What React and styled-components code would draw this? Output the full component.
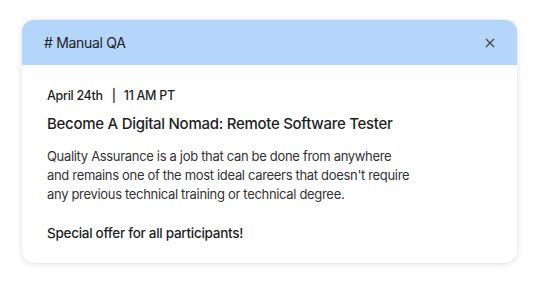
import React from 'react';
import styled, { createGlobalStyle } from 'styled-components';

const GlobalStyle = createGlobalStyle`
	html, body {
		margin: 0;
		padding: 0;
		background: #fff;
		font-family: Inter, "Noto Sans", sans-serif;
		-webkit-font-smoothing: antialiased;
	}
`;

const Page = styled.div`
	width: 540px;
	height: 283px;
	padding: 20px 23px 0 22px;
	box-sizing: border-box;
`;

const Card = styled.div`
	width: 495px;
	height: 243px;
	border-radius: 12px;
	background: #fff;
	overflow: hidden;
	box-shadow: 0 1px 6px rgba(0, 0, 0, 0.12), 0 0 2px rgba(0, 0, 0, 0.06);
	display: flex;
	flex-direction: column;
`;

const Header = styled.div`
	height: 45px;
	background: #b4d6fa;
	display: flex;
	align-items: center;
	justify-content: space-between;
	padding: 0 20px 0 22px;
	box-sizing: border-box;
`;

const Channel = styled.span`
	font-size: 14px;
	color: #222;
	letter-spacing: -0.3px;
`;

const Close = styled.button`
	border: 0;
	background: none;
	padding: 0;
	width: 14px;
	height: 14px;
	display: flex;
	color: #444;
	cursor: pointer;
`;

const Body = styled.div`
	padding: 22px 25px 0;
	display: flex;
	flex-direction: column;
	color: #1f1f1f;
`;

const Meta = styled.div`
	font-size: 12.5px;
	font-weight: 500;
	line-height: 18px;
	letter-spacing: -0.3px;
	display: flex;
	align-items: center;
`;

const Divider = styled.span`
	margin: 0 8px 0 9px;
`;

const Title = styled.div`
	font-size: 15px;
	font-weight: 500;
	margin-top: 9px;
	line-height: 20px;
	letter-spacing: -0.28px;
`;

const Text = styled.p`
	margin: 13px 0 0;
	font-size: 13px;
	line-height: 19px;
	color: #333;
	letter-spacing: -0.32px;
`;

const Offer = styled.div`
	margin-top: 20px;
	font-size: 13.5px;
	font-weight: 500;
	line-height: 19px;
	letter-spacing: -0.28px;
`;

const App = () => (
	<>
		<GlobalStyle />
		<Page>
			<Card>
				<Header>
					<Channel># Manual QA</Channel>
					<Close aria-label='close'>
						<svg width='14' height='14' viewBox='0 0 14 14' fill='none' stroke='currentColor' strokeWidth='1.2'>
							<path d='M3 3l8 8M11 3l-8 8' />
						</svg>
					</Close>
				</Header>
				<Body>
					<Meta>
						April 24th<Divider>|</Divider>11 AM PT
					</Meta>
					<Title>Become A Digital Nomad: Remote Software Tester</Title>
					<Text>
						Quality Assurance is a job that can be done from anywhere<br />
						and remains one of the most ideal careers that doesn't require<br />
						any previous technical training or technical degree.
					</Text>
					<Offer>Special offer for all participants!</Offer>
				</Body>
			</Card>
		</Page>
	</>
);

export default App;
